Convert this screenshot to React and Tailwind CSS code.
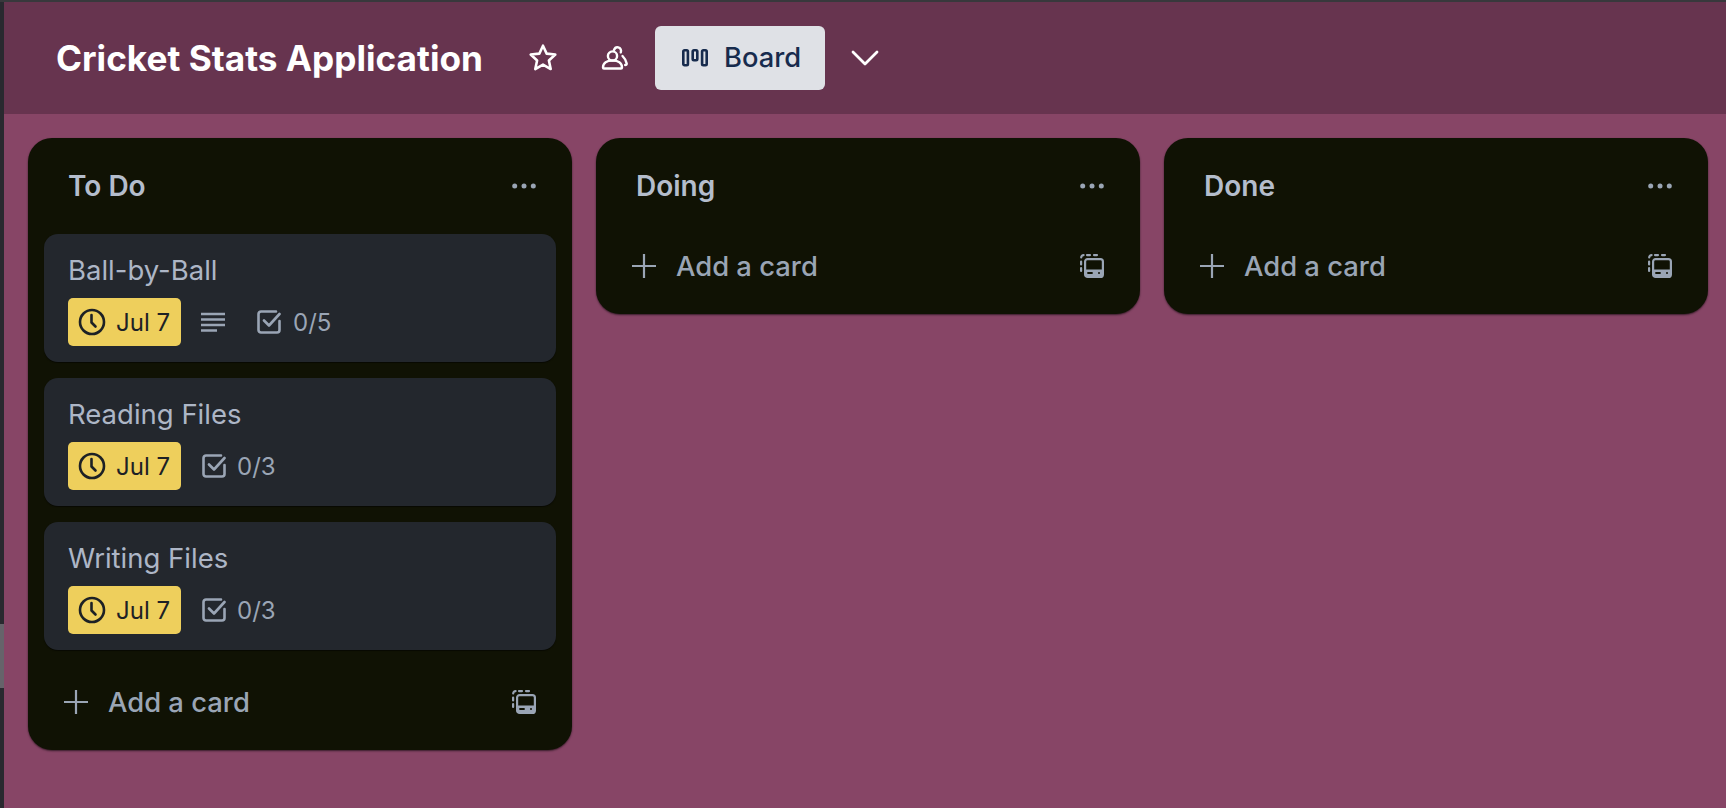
import React from "react";

const font = { fontFamily: "Inter, 'Liberation Sans', sans-serif" };

const StarIcon = () => (
    <svg width="30" height="30" viewBox="0 0 28 28" fill="none" stroke="#fff" strokeWidth="2.4" strokeLinejoin="round">
        <path d="M14 2.5l3.4 7.4 8.1.9-6 5.5 1.7 8-7.2-4.1-7.2 4.1 1.7-8-6-5.5 8.1-.9z" />
    </svg>
);

const PeopleIcon = () => (
    <svg width="28" height="26" viewBox="0 0 28 26" fill="none" stroke="#fff" strokeWidth="2.4" strokeLinecap="round" strokeLinejoin="round">
        <circle cx="11.5" cy="11" r="4.6" />
        <path d="M2 22.5c0-4.5 4-7 9.5-7s9.5 2.500 9.500 7c0 .6-.4 1-1 1H3c-.6 0-1-.4-1-1z" />
        <path d="M13 5c.8-2 2.500-3 4.200-2.600 2.300.5 3.400 2.800 2.600 5" />
        <path d="M21.500 11c1.800 1.800 3.500 4.200 4.200 7.500 0 1-.5 1.500-1.500 1.500" />
    </svg>
);

const BoardIcon = () => (
    <svg width="26" height="18" viewBox="0 0 26 18" fill="none" stroke="#172b4d" strokeWidth="2.600">
        <rect x="1.300" y="1.300" width="4.600" height="15" rx="1.200" />
        <rect x="10.700" y="1.300" width="4.600" height="10" rx="1.200" />
        <rect x="20.100" y="1.300" width="4.600" height="15" rx="1.200" />
    </svg>
);

const ChevronIcon = () => (
    <svg width="28" height="16" viewBox="0 0 28 16" fill="none" stroke="#fff" strokeWidth="2.800" strokeLinecap="round" strokeLinejoin="round">
        <path d="M2 2l12 12L26 2" />
    </svg>
);

const DotsIcon = () => (
    <svg width="24" height="6" viewBox="0 0 24 6" fill="#9aa5b5">
        <circle cx="2.700" cy="3" r="2.500" />
        <circle cx="12" cy="3" r="2.500" />
        <circle cx="21.300" cy="3" r="2.500" />
    </svg>
);

const PlusIcon = () => (
    <svg width="24" height="24" viewBox="0 0 24 24" fill="none" stroke="#9aa5b5" strokeWidth="2.200">
        <path d="M12 0v24M0 12h24" />
    </svg>
);

const TemplateIcon = () => (
    <svg width="24" height="24" viewBox="0 0 24 24" fill="none">
        <path d="M1.200 3.500a2.400 2.400 0 0 1 2.400-2.400" stroke="#9aa5b5" strokeWidth="2.200" strokeLinecap="round" />
        <path d="M7 1.100h3M14 1.100h3M1.100 7.500v3M1.100 14v3" stroke="#9aa5b5" strokeWidth="2.200" strokeLinecap="round" />
        <rect x="5.100" y="5.100" width="17.800" height="17.800" rx="2.500" stroke="#9aa5b5" strokeWidth="2.200" />
        <path d="M5.100 15.500h17.800v5a2.400 2.400 0 0 1-2.400 2.400H7.500a2.400 2.400 0 0 1-2.400-2.400z" fill="#9aa5b5" />
        <path d="M8 19h4" stroke="#101204" strokeWidth="1.800" strokeLinecap="round" />
        <circle cx="19" cy="19" r="1" fill="#101204" />
    </svg>
);

const ClockIcon = () => (
    <svg width="28" height="28" viewBox="0 0 28 28" fill="none" stroke="#1d2125" strokeWidth="2.600" strokeLinecap="round" strokeLinejoin="round">
        <circle cx="14" cy="14" r="12" />
        <path d="M13.500 7v7.500l4 4" />
    </svg>
);

const DescriptionIcon = () => (
    <svg width="24" height="20" viewBox="0 0 24 20" fill="none" stroke="#9aa5b5" strokeWidth="2.600">
        <path d="M0 2h24M0 7.500h24M0 13h24M0 18.500h16" />
    </svg>
);

const ChecklistIcon = () => (
    <svg width="24" height="24" viewBox="0 0 24 24" fill="none" stroke="#9aa5b5" strokeWidth="2.600" strokeLinecap="round" strokeLinejoin="round">
        <path d="M22.500 11v9a2.500 2.500 0 0 1-2.500 2.500H4A2.500 2.500 0 0 1 1.500 20V4A2.500 2.500 0 0 1 4 1.500h15" />
        <path d="M7 10.500l5 5L22.500 4" />
    </svg>
);

const cards = [
    { title: "Ball-by-Ball", description: true, checklist: "0/5" },
    { title: "Reading Files", checklist: "0/3" },
    { title: "Writing Files", checklist: "0/3" },
];

const Card = ({ card }) => (
    <div className="rounded-[14px] bg-[#23272d] px-6 pt-4 pb-4 shadow-[0_1px_1px_rgba(0,0,0,0.5)]">
        <div className="text-[27.5px] leading-[40px] text-[#adb6c6]">{card.title}</div>
        <div className="mt-2 flex h-12 items-center">
            <div className="flex h-12 w-[113px] items-center gap-[10px] rounded-[5px] bg-[#eecf5c] pl-[10px] text-[24px] text-[#1d2125]">
                <ClockIcon />
                <span className="pt-[2px]">Jul 7</span>
            </div>
            {card.description && (
                <div className="ml-5">
                    <DescriptionIcon />
                </div>
            )}
            <div className={card.description ? "ml-[32px] flex items-center" : "ml-[21px] flex items-center"}>
                <ChecklistIcon />
                <span className={card.description ? "ml-[12px] pt-[2px] text-[24px] text-[#9aa5b5]" : "ml-[11px] pt-[2px] text-[24px] text-[#9aa5b5]"}>{card.checklist}</span>
            </div>
        </div>
    </div>
);

const Column = ({ title, items }) => (
    <div className="flex w-[544px] shrink-0 flex-col rounded-[24px] bg-[#101204] px-4 shadow-[0_1px_2px_rgba(0,0,0,0.6)]">
        <div className="flex h-[96px] shrink-0 items-center justify-between pl-[24px] pr-[20px]">
            <span className="text-[28px] font-semibold text-[#b4bdcc]">{title}</span>
            <DotsIcon />
        </div>
        {items.length > 0 && (
            <div className="flex flex-col gap-4">
                {items.map((card) => (
                    <Card key={card.title} card={card} />
                ))}
            </div>
        )}
        <div className={items.length > 0 ? "mt-4 flex h-[84px] items-center justify-between pl-[20px] pr-[20px] pb-[12px]" : "flex h-[80px] items-center justify-between pl-[20px] pr-[20px] pb-[16px]"}>
            <div className="flex items-center gap-[20px]">
                <PlusIcon />
                <span className="pt-[2px] text-[27.4px] font-medium text-[#9aa5b5]">Add a card</span>
            </div>
            <TemplateIcon />
        </div>
    </div>
);

const App = () => {
    return (
        <div style={font} className="flex h-screen flex-col overflow-hidden bg-[#874566]">
            <div className="h-[2px] shrink-0 bg-[#38383c]" />
            <div className="flex flex-1">
                <div className="flex w-[4px] shrink-0 flex-col bg-[#29292f]">
                    <div className="mt-[622px] h-[64px] bg-[#66636a]" />
                </div>
                <div className="flex-1">
                    <div className="flex h-[112px] items-center bg-[#67344f] pl-[52px]">
                        <h1 className="w-[458px] text-[35.2px] font-bold text-white">Cricket Stats Application</h1>
                        <div className="flex w-[141px] items-center">
                            <div className="ml-[14px]">
                                <StarIcon />
                            </div>
                            <div className="ml-[43px]">
                                <PeopleIcon />
                            </div>
                        </div>
                        <div className="flex h-16 w-[170px] items-center gap-[16px] rounded-[6px] bg-[#dfe1e6] pl-[27px] text-[27.3px] font-medium text-[#172b4d]">
                            <BoardIcon />
                            <span>Board</span>
                        </div>
                        <div className="ml-[26px]">
                            <ChevronIcon />
                        </div>
                    </div>
                    <div className="flex items-start gap-6 pl-[24px] pt-[24px]">
                        <Column title="To Do" items={cards} />
                        <Column title="Doing" items={[]} />
                        <Column title="Done" items={[]} />
                    </div>
                </div>
            </div>
        </div>
    );
};

export default App;
